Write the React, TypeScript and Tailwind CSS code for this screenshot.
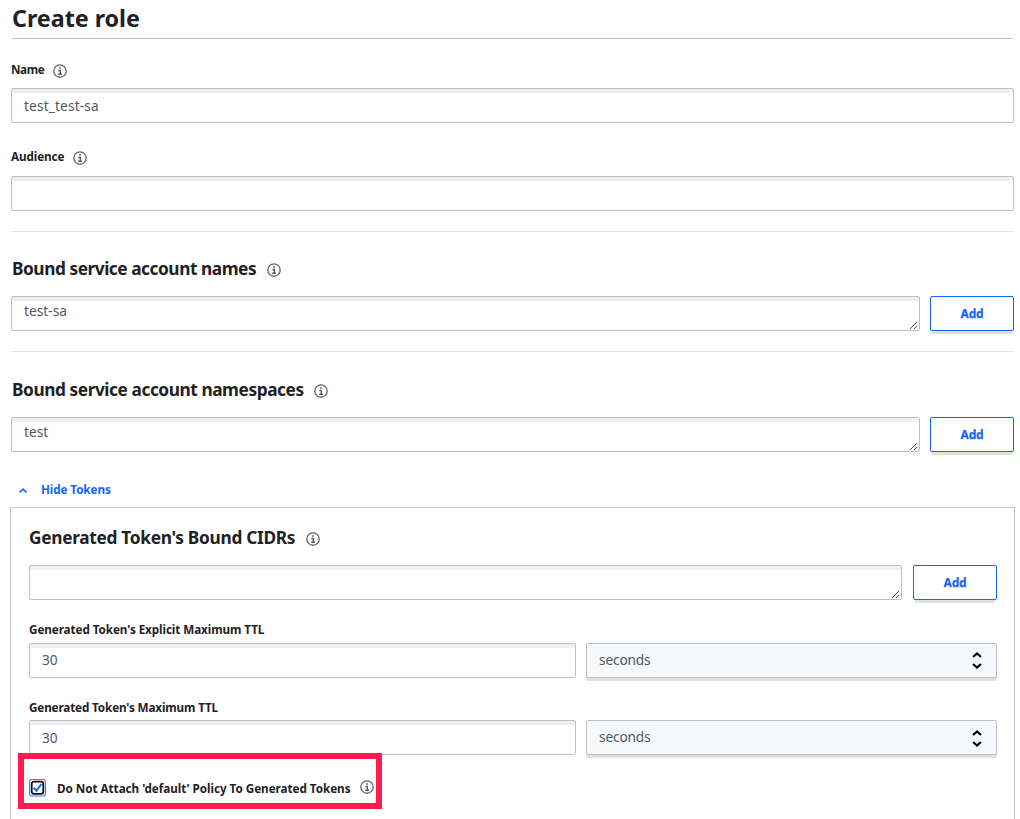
import React from "react";

function Info({ className = "" }: { className?: string }) {
  return (
    <svg className={`block h-[14px] w-[14px] shrink-0 ${className}`} viewBox="0 0 14 14" fill="none">
      <circle cx="7" cy="7" r="6.2" stroke="#62666f" strokeWidth="1.35" />
      <path d="M5.4 6.5H7.3V10M5.2 10.2H9" stroke="#55595f" strokeWidth="1.35" />
      <path d="M6.2 3.2H7.8V4.8H6.2Z" fill="#44484f" />
    </svg>
  );
}

const gripDots = [
  [0, 7], [1, 6], [2, 5], [3, 4], [4, 3], [5, 2], [6, 1],
  [4, 7], [5, 6], [6, 5],
];

function Grip() {
  return (
    <svg className="absolute right-[1px] bottom-[1px] h-[8px] w-[8px]" viewBox="0 0 8 8" fill="#555" shapeRendering="crispEdges">
      {gripDots.map(([x, y]) => (
        <rect key={`${x}-${y}`} x={x} y={y} width="1" height="1" />
      ))}
    </svg>
  );
}

const field =
  "relative h-[35px] rounded-[2px] border border-[#bac1cc] bg-white px-3 text-[#525761] shadow-[inset_0_4px_0_#f0f0f0]";

function Area({ value = "" }: { value?: string }) {
  return (
    <div className={`${field} flex-1 text-[13.7px] leading-[28px] tracking-[0.03px]`}>
      {value}
      <Grip />
    </div>
  );
}

function AddRow({ value, gap }: { value?: string; gap: string }) {
  return (
    <div className={`flex ${gap}`}>
      <Area value={value} />
      <button className="h-[35px] w-[84px] rounded-[2px] border border-[#1563ff] bg-white text-[12px] font-bold tracking-[-0.2px] text-[#1563ff] shadow-[0_5px_0_-2px_#e0e0e0] [text-shadow:0_1px_1px_#ccd]">
        Add
      </button>
    </div>
  );
}

function TtlRow({ first }: { first?: boolean }) {
  return (
    <div className="flex gap-[10px]">
      <div className={`${field} w-[547px] text-[13.7px] ${first ? "leading-[32px]" : "leading-[34px]"}`}>30</div>
      <div className="flex h-[35px] flex-1 items-center justify-between rounded-[2px] border border-[#bac1cc] bg-[#f7f8fa] pr-[14px] pl-3 text-[13.7px] text-[#525761] shadow-[0_3px_1px_#e0e0e0]">
        <span className="tracking-[-0.15px]">seconds</span>
        <svg className={`h-[19px] w-[10px] ${first ? "mt-[-1px]" : "mt-[2px]"}`} viewBox="0 0 10 19" fill="none" stroke="#000" strokeWidth="2.1">
          <path d="M1 6L5 2.4L9 6M1 13L5 16.6L9 13" />
        </svg>
      </div>
    </div>
  );
}

export default function App() {
  return (
    <div className="h-[819px] w-[1020px] overflow-hidden bg-white font-['Noto_Sans',sans-serif] text-[#1f2124]">
      <main className="pr-[6px] pl-[11px]">
        <h1 className="mx-px h-[39px] border-b border-[#bac1cc] text-[23.3px] leading-[37px] font-bold tracking-[-0.03px]">
          <span>Create role</span>
        </h1>
        <div className="flex h-[49px] items-start pt-[21px] text-[11.7px] leading-[18px] font-bold">
          <span className="w-[42px] tracking-[-0.4px]">Name</span>
          <Info className="mt-[4px]" />
        </div>
        <div className={`${field} text-[13.7px] leading-[33px]`}>
          <span className="tracking-[0.15px]">test_test-sa</span>
        </div>
        <div className="flex h-[53px] items-start pt-[24px] text-[11.7px] leading-[18px] font-bold">
          <span className="w-[62px] tracking-[-0.1px]">Audience</span>
          <Info className="mt-[4px]" />
        </div>
        <div className={field} />
        <div className="mt-5 h-px bg-[#e3e5e8]" />
        <div className="flex h-[64px] pt-[24px] pl-px text-[17.3px] leading-[26px] font-bold">
          <span className="w-[255px] whitespace-nowrap tracking-[-0.46px]">Bound service account names</span>
          <Info className="mt-[7px]" />
        </div>
        <AddRow value="test-sa" gap="gap-[10px]" />
        <div className="mt-5 h-px bg-[#e3e5e8]" />
        <div className="flex h-[65px] pt-[25px] pl-px text-[17.3px] leading-[26px] font-bold">
          <span className="w-[302px] whitespace-nowrap tracking-[-0.44px]">Bound service account namespaces</span>
          <Info className="mt-[7px]" />
        </div>
        <AddRow value="test" gap="gap-[10px]" />
        <div className="flex h-[55px] pt-[28px] pl-[8px] text-[11.7px] leading-[18px] font-bold text-[#1563ff]">
          <svg className="mt-[8px] mr-[14px] h-[5px] w-[8px]" viewBox="0 0 8 5" fill="none" stroke="#1563ff" strokeWidth="1.6">
            <path d="M0.6 4.3L4 1.1L7.4 4.3" />
          </svg>
          <span className="tracking-[-0.1px]">Hide Tokens</span>
        </div>
        <section className="mr-[-1px] ml-[-1px] h-[330px] border border-[#c3c6cb] pr-[17px] pl-[18px]">
          <div className="flex h-[57px] pt-[17px] text-[17.3px] leading-[26px] font-bold">
            <span className="w-[277px] whitespace-nowrap tracking-[-0.3px]">Generated Token's Bound CIDRs</span>
            <Info className="mt-[7px]" />
          </div>
          <AddRow gap="gap-[11px]" />
          <div className="h-[43px] pt-[20px] text-[11.7px] leading-[18px] font-bold">
            <span className="tracking-[-0.08px]">Generated Token's Explicit Maximum TTL</span>
          </div>
          <TtlRow first />
          <div className="h-[42px] pt-[20px] text-[11.7px] leading-[18px] font-bold">
            <span className="tracking-[-0.14px]">Generated Token's Maximum TTL</span>
          </div>
          <TtlRow />
          <div className="relative flex h-[64px] pt-[24px] text-[11.7px] leading-[18px] font-bold">
            <div className="absolute top-[-2px] left-[-11px] h-[56px] w-[364px] border-6 border-[#ff1b4b]" />
            <svg className="h-[18px] w-[28px] shrink-0" viewBox="0 0 28 18" fill="none">
              <rect x="0.5" y="0.5" width="16" height="16.5" rx="2.5" stroke="#3f7fff" strokeWidth="1.2" />
              <rect x="2.7" y="2.7" width="11.6" height="12.1" rx="2" fill="#fff" stroke="#111" strokeWidth="1.8" />
              <path d="M4.6 8.7L7.4 11.7L12.5 5" stroke="#1563ff" strokeWidth="2" />
            </svg>
            <span className="w-[303px] whitespace-nowrap tracking-[-0.04px]">Do Not Attach 'default' Policy To Generated Tokens</span>
            <Info className="mt-px" />
          </div>
        </section>
      </main>
    </div>
  );
}
